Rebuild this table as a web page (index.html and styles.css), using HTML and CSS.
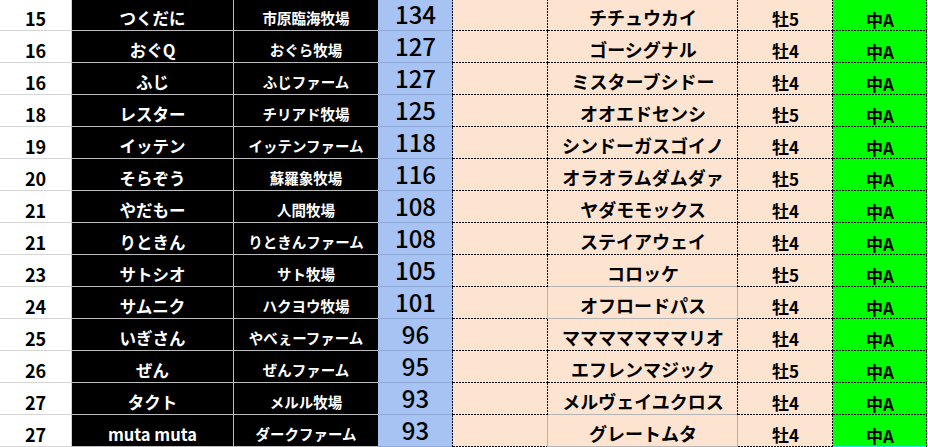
FILE: index.html
```html
<!DOCTYPE html>
<html lang="ja">
<head>
<meta charset="utf-8">
<title>ランキング</title>
<link rel="stylesheet" href="styles.css">
</head>
<body>
<div class="sheet">
  <div class="row"><div class="c rank">15</div><div class="c owner">つくだに</div><div class="c farm">市原臨海牧場</div><div class="c pt">134</div><div class="c blank"></div><div class="c horse">チチュウカイ</div><div class="c sex">牡5</div><div class="c dist">中A</div></div>
  <div class="row"><div class="c rank">16</div><div class="c owner">おぐQ</div><div class="c farm">おぐら牧場</div><div class="c pt">127</div><div class="c blank"></div><div class="c horse">ゴーシグナル</div><div class="c sex">牡4</div><div class="c dist">中A</div></div>
  <div class="row"><div class="c rank">16</div><div class="c owner">ふじ</div><div class="c farm">ふじファーム</div><div class="c pt">127</div><div class="c blank"></div><div class="c horse">ミスターブシドー</div><div class="c sex">牡4</div><div class="c dist">中A</div></div>
  <div class="row"><div class="c rank">18</div><div class="c owner">レスター</div><div class="c farm">チリアド牧場</div><div class="c pt">125</div><div class="c blank"></div><div class="c horse">オオエドセンシ</div><div class="c sex">牡5</div><div class="c dist">中A</div></div>
  <div class="row"><div class="c rank">19</div><div class="c owner">イッテン</div><div class="c farm">イッテンファーム</div><div class="c pt">118</div><div class="c blank"></div><div class="c horse">シンドーガスゴイノ</div><div class="c sex">牡4</div><div class="c dist">中A</div></div>
  <div class="row"><div class="c rank">20</div><div class="c owner">そらぞう</div><div class="c farm">蘇羅象牧場</div><div class="c pt">116</div><div class="c blank"></div><div class="c horse">オラオラムダムダァ</div><div class="c sex">牡5</div><div class="c dist">中A</div></div>
  <div class="row"><div class="c rank">21</div><div class="c owner">やだもー</div><div class="c farm">人間牧場</div><div class="c pt">108</div><div class="c blank"></div><div class="c horse">ヤダモモックス</div><div class="c sex">牡4</div><div class="c dist">中A</div></div>
  <div class="row"><div class="c rank">21</div><div class="c owner">りときん</div><div class="c farm">りときんファーム</div><div class="c pt">108</div><div class="c blank"></div><div class="c horse">ステイアウェイ</div><div class="c sex">牡4</div><div class="c dist">中A</div></div>
  <div class="row"><div class="c rank">23</div><div class="c owner">サトシオ</div><div class="c farm">サト牧場</div><div class="c pt">105</div><div class="c blank"></div><div class="c horse above-box">コロッケ</div><div class="c sex">牡5</div><div class="c dist">中A</div></div>
  <div class="row"><div class="c rank">24</div><div class="c owner">サムニク</div><div class="c farm">ハクヨウ牧場</div><div class="c pt">101</div><div class="c blank left-of-box"></div><div class="c horse boxed">オフロードパス</div><div class="c sex">牡4</div><div class="c dist">中A</div></div>
  <div class="row"><div class="c rank">25</div><div class="c owner">いぎさん</div><div class="c farm">やべぇーファーム</div><div class="c pt">96</div><div class="c blank"></div><div class="c horse">マママママママリオ</div><div class="c sex">牡4</div><div class="c dist">中A</div></div>
  <div class="row"><div class="c rank">26</div><div class="c owner">ぜん</div><div class="c farm">ぜんファーム</div><div class="c pt">95</div><div class="c blank"></div><div class="c horse">エフレンマジック</div><div class="c sex">牡5</div><div class="c dist">中A</div></div>
  <div class="row"><div class="c rank">27</div><div class="c owner">タクト</div><div class="c farm">メルル牧場</div><div class="c pt">93</div><div class="c blank"></div><div class="c horse above-box">メルヴェイユクロス</div><div class="c sex">牡4</div><div class="c dist">中A</div></div>
  <div class="row last"><div class="c rank">27</div><div class="c owner">muta muta</div><div class="c farm">ダークファーム</div><div class="c pt">93</div><div class="c blank left-of-box"></div><div class="c horse boxed">グレートムタ</div><div class="c sex">牡4</div><div class="c dist">中A</div></div>
</div>
</body>
</html>
```
FILE: styles.css
```css
* { box-sizing: border-box; }

html, body {
  margin: 0;
  padding: 0;
  background: #ffffff;
  overflow: hidden;
}

body {
  font-family: "Noto Sans CJK JP", "Noto Sans", sans-serif;
  color: #000;
}

.sheet {
  margin-top: -1px;
  width: 928px;
}

.row {
  display: grid;
  grid-template-columns: 72px 162px 144px 75px 95px 190px 95px 95px;
  height: 32px;
}

.c {
  display: flex;
  align-items: center;
  justify-content: center;
  white-space: nowrap;
  line-height: 1;
}

.rank {
  background: #fff;
  border-right: 1px solid #cfcfcf;
  border-bottom: 1px solid #d6d6d6;
  font-weight: 700;
  font-size: 18px;
  padding-top: 6px;
}

.owner {
  background: #000;
  border-right: 1px solid #bdbdbd;
  border-bottom: 1px solid #bdbdbd;
  color: #fff;
  font-weight: 700;
  font-size: 16.5px;
  padding-top: 7px;
}

.farm {
  background: #000;
  border-bottom: 1px solid #bdbdbd;
  color: #fff;
  font-weight: 700;
  font-size: 14.5px;
  padding-top: 8px;
}

.pt {
  background:
    linear-gradient(#000 2px, transparent 2px) right top / 1px 3px repeat-y,
    linear-gradient(#8fa9d8, #8fa9d8) left bottom / 100% 1px no-repeat,
    #a6c3f4;
  font-weight: 500;
  font-size: 24px;
  padding-bottom: 3px;
}

.blank,
.horse,
.sex {
  background:
    linear-gradient(#000 2px, transparent 2px) right top / 1px 3px repeat-y,
    linear-gradient(90deg, #000 2px, transparent 2px) left bottom / 3px 1px repeat-x,
    #fce4d0;
}

.horse {
  font-weight: 700;
  font-size: 18px;
  padding-top: 4px;
}

.sex {
  font-weight: 700;
  font-size: 17px;
  padding-top: 7px;
}

.dist {
  background:
    linear-gradient(#000 2px, transparent 2px) right top / 1px 3px repeat-y,
    linear-gradient(90deg, #000 2px, transparent 2px) left bottom / 3px 1px repeat-x,
    #00ff00;
  font-weight: 700;
  font-size: 17px;
  padding-top: 8px;
  margin-right: 1px;
}

.last .dist {
  background:
    linear-gradient(#000 2px, transparent 2px) right top / 1px 3px repeat-y,
    linear-gradient(#22e6f0, #22e6f0) left bottom / 100% 1px no-repeat,
    #00ff00;
}

.horse.above-box {
  background:
    linear-gradient(#000 2px, transparent 2px) right top / 1px 3px repeat-y,
    linear-gradient(#b4b4b4, #b4b4b4) left bottom / 100% 1px no-repeat,
    #fce4d0;
}

.blank.left-of-box {
  background:
    linear-gradient(#b4b4b4, #b4b4b4) right top / 1px 100% no-repeat,
    linear-gradient(90deg, #000 2px, transparent 2px) left bottom / 3px 1px repeat-x,
    #fce4d0;
}

.horse.boxed {
  background:
    linear-gradient(#b4b4b4, #b4b4b4) right top / 1px 100% no-repeat,
    linear-gradient(#b4b4b4, #b4b4b4) left bottom / 100% 1px no-repeat,
    #fce4d0;
}
```
